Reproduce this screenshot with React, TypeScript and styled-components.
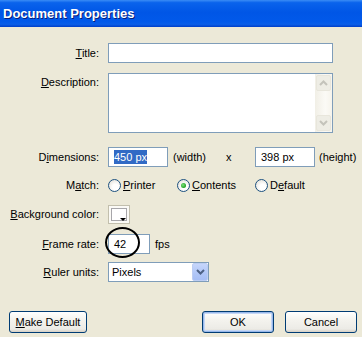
import styled, { createGlobalStyle } from "styled-components";

const GlobalStyle = createGlobalStyle`
  html, body {
    margin: 0;
    padding: 0;
    background: #ece9d8;
  }
  body {
    font-family: "Liberation Sans", Arial, sans-serif;
    font-size: 11px;
    color: #000;
  }
`;

const Dialog = styled.div`
  width: 362px;
  height: 337px;
  background: #ece9d8;
  display: flex;
  flex-direction: column;
  overflow: hidden;
`;

const TitleBar = styled.div`
  height: 27px;
  flex: none;
  display: flex;
  align-items: center;
  padding-left: 3px;
  background: linear-gradient(
    #3a8cf5 0,
    #0a63ec 10%,
    #0056e6 45%,
    #0159ea 80%,
    #0a5ee8 90%,
    #003ec8 100%
  );
  color: #fff;
  font-family: "Liberation Sans", Arial, sans-serif;
  font-weight: bold;
  font-size: 13px;
  text-shadow: 1px 1px 0 #0a1e7a;
`;

const Form = styled.div`
  display: grid;
  grid-template-columns: 100px minmax(0, 1fr);
  grid-template-rows: 30px 74px 30px 27px 30px 28px 20px;
  column-gap: 8px;
  padding: 16px 29px 0 0;
  align-items: start;
`;

const Label = styled.label<{ $top?: number; $lh?: number }>`
  text-align: right;
  padding-right: 1px;
  line-height: ${(p) => p.$lh ?? 20}px;
  padding-top: ${(p) => p.$top ?? 0}px;
  white-space: nowrap;
`;

const Key = styled.span`
  text-decoration: underline;
`;

const Field = styled.div<{ $h?: number }>`
  display: flex;
  align-items: center;
  min-height: ${(p) => p.$h ?? 20}px;
  white-space: nowrap;
`;

const TextBox = styled.div<{ $w?: number }>`
  box-sizing: border-box;
  height: 20px;
  width: ${(p) => (p.$w ? `${p.$w}px` : "100%")};
  border: 1px solid #7f9db9;
  background: #fff;
  padding-left: 5px;
  line-height: 18px;
  flex: none;
  position: relative;
`;

const Selected = styled.span`
  background: #316ac5;
  color: #fff;
  padding: 1px 0;
`;

const TextArea = styled.div`
  box-sizing: border-box;
  height: 60px;
  border: 1px solid #7f9db9;
  background: #fff;
  display: flex;
  justify-content: flex-end;
`;

const ScrollBar = styled.div`
  width: 17px;
  display: flex;
  flex-direction: column;
  justify-content: space-between;
  background: linear-gradient(90deg, #f1efe6, #fbfaf6 60%, #f6f4ec);
`;

const ScrollButton = styled.div`
  box-sizing: border-box;
  height: 16px;
  margin: 1px;
  border: 1px solid #e8e6dc;
  border-radius: 2px;
  background: #eeede5;
  display: flex;
  align-items: center;
  justify-content: center;
`;

const Unit = styled.span<{ $ml?: number; $w?: number }>`
  margin-left: ${(p) => p.$ml ?? 0}px;
  width: ${(p) => (p.$w ? `${p.$w}px` : "auto")};
  flex: none;
`;

const RadioOption = styled.div<{ $w?: number }>`
  display: flex;
  align-items: center;
  gap: 2px;
  width: ${(p) => (p.$w ? `${p.$w}px` : "auto")};
  height: 16px;
  flex: none;
`;

const RadioCircle = styled.span<{ $on?: boolean }>`
  box-sizing: border-box;
  width: 13px;
  height: 13px;
  border-radius: 50%;
  border: 1px solid #1c5180;
  background: radial-gradient(circle at 60% 65%, #fff 0, #fff 30%, #dcd9cf 100%);
  display: flex;
  align-items: center;
  justify-content: center;
  &::after {
    content: "";
    display: ${(p) => (p.$on ? "block" : "none")};
    width: 5px;
    height: 5px;
    border-radius: 50%;
    background: radial-gradient(circle at 40% 40%, #7ee27e, #21a121 70%);
  }
`;

const Swatch = styled.div`
  box-sizing: border-box;
  width: 22px;
  height: 19px;
  border: 1px solid #c2bfad;
  background: #fbfaf6;
  padding: 2px;
  position: relative;
  &::before {
    content: "";
    display: block;
    width: 100%;
    height: 100%;
    background: #fff;
    border: 1px solid #a7a6aa;
    box-sizing: border-box;
  }
  &::after {
    content: "";
    position: absolute;
    right: 3px;
    bottom: 2px;
    border-left: 3px solid transparent;
    border-right: 3px solid transparent;
    border-top: 3px solid #000;
  }
`;

const Marker = styled.div`
  position: absolute;
  left: -4px;
  top: -8px;
  width: 35px;
  height: 31px;
  border: 2px solid #000;
  border-radius: 50%;
  box-sizing: border-box;
  pointer-events: none;
`;

const Select = styled.div`
  box-sizing: border-box;
  width: 101px;
  height: 20px;
  border: 1px solid #7f9db9;
  background: #fff;
  display: flex;
  align-items: center;
  justify-content: space-between;
  padding-left: 3px;
`;

const DropButton = styled.div`
  box-sizing: border-box;
  width: 16px;
  height: 18px;
  border: 1px solid #bccdf3;
  border-radius: 2px;
  background: linear-gradient(#c6d6fb, #b0c6f7 60%, #a6bef5);
  display: flex;
  align-items: center;
  justify-content: center;
`;

const Footer = styled.div`
  margin-top: 29px;
  display: flex;
  align-items: center;
  gap: 11px;
  padding: 0 5px 0 9px;
`;

const Button = styled.button<{ $w: number; $focused?: boolean }>`
  box-sizing: border-box;
  width: ${(p) => p.$w}px;
  height: 22px;
  border: 1px solid #003c74;
  border-radius: 3px;
  background: linear-gradient(#fff, #f4f3ee 40%, #ecebe6 85%, #d6d0c5);
  font-family: "Liberation Sans", Arial, sans-serif;
  font-size: 11px;
  color: #000;
  padding: 0;
  box-shadow: ${(p) =>
    p.$focused ? "inset 0 0 0 1px #98b8ea, inset 0 0 0 2px #c5d7f5" : "none"};
`;

const Spacer = styled.div`
  flex: 1;
`;

function Chevron({ up, color }: { up?: boolean; color: string }) {
  return (
    <svg width="9" height="6" viewBox="0 0 9 6">
      <path
        d={up ? "M1 5 L4.5 1.5 L8 5" : "M1 1 L4.5 4.5 L8 1"}
        fill="none"
        stroke={color}
        strokeWidth="2"
      />
    </svg>
  );
}

export default function App() {
  return (
    <Dialog>
      <GlobalStyle />
      <TitleBar>Document Properties</TitleBar>
      <Form>
        <Label>
          <Key>T</Key>itle:
        </Label>
        <Field>
          <TextBox />
        </Field>

        <Label $top={3} $lh={13}>
          <Key>D</Key>escription:
        </Label>
        <TextArea>
          <ScrollBar>
            <ScrollButton>
              <Chevron up color="#c4c3bb" />
            </ScrollButton>
            <ScrollButton>
              <Chevron color="#c4c3bb" />
            </ScrollButton>
          </ScrollBar>
        </TextArea>

        <Label>
          D<Key>i</Key>mensions:
        </Label>
        <Field>
          <TextBox $w={60}>
            <Selected>450 px</Selected>
          </TextBox>
          <Unit $ml={5} $w={53}>(width)</Unit>
          <Unit $w={29}>x</Unit>
          <TextBox $w={60}>398 px</TextBox>
          <Unit $ml={4}>(height)</Unit>
        </Field>

        <Label $lh={16}>
          M<Key>a</Key>tch:
        </Label>
        <Field $h={16}>
          <RadioOption $w={69}>
            <RadioCircle />
            <span>
              <Key>P</Key>rinter
            </span>
          </RadioOption>
          <RadioOption $w={78}>
            <RadioCircle $on />
            <span>
              <Key>C</Key>ontents
            </span>
          </RadioOption>
          <RadioOption>
            <RadioCircle />
            <span>
              D<Key>e</Key>fault
            </span>
          </RadioOption>
        </Field>

        <Label>
          <Key>B</Key>ackground color:
        </Label>
        <Field>
          <Swatch />
        </Field>

        <Label>
          <Key>F</Key>rame rate:
        </Label>
        <Field>
          <TextBox $w={42}>
            42
            <Marker />
          </TextBox>
          <Unit $ml={5}>fps</Unit>
        </Field>

        <Label>
          <Key>R</Key>uler units:
        </Label>
        <Field>
          <Select>
            <span>Pixels</span>
            <DropButton>
              <Chevron color="#4d6185" />
            </DropButton>
          </Select>
        </Field>
      </Form>
      <Footer>
        <Button $w={78}>
          <Key>M</Key>ake Default
        </Button>
        <Spacer />
        <Button $w={72} $focused>
          OK
        </Button>
        <Button $w={72}>Cancel</Button>
      </Footer>
    </Dialog>
  );
}
